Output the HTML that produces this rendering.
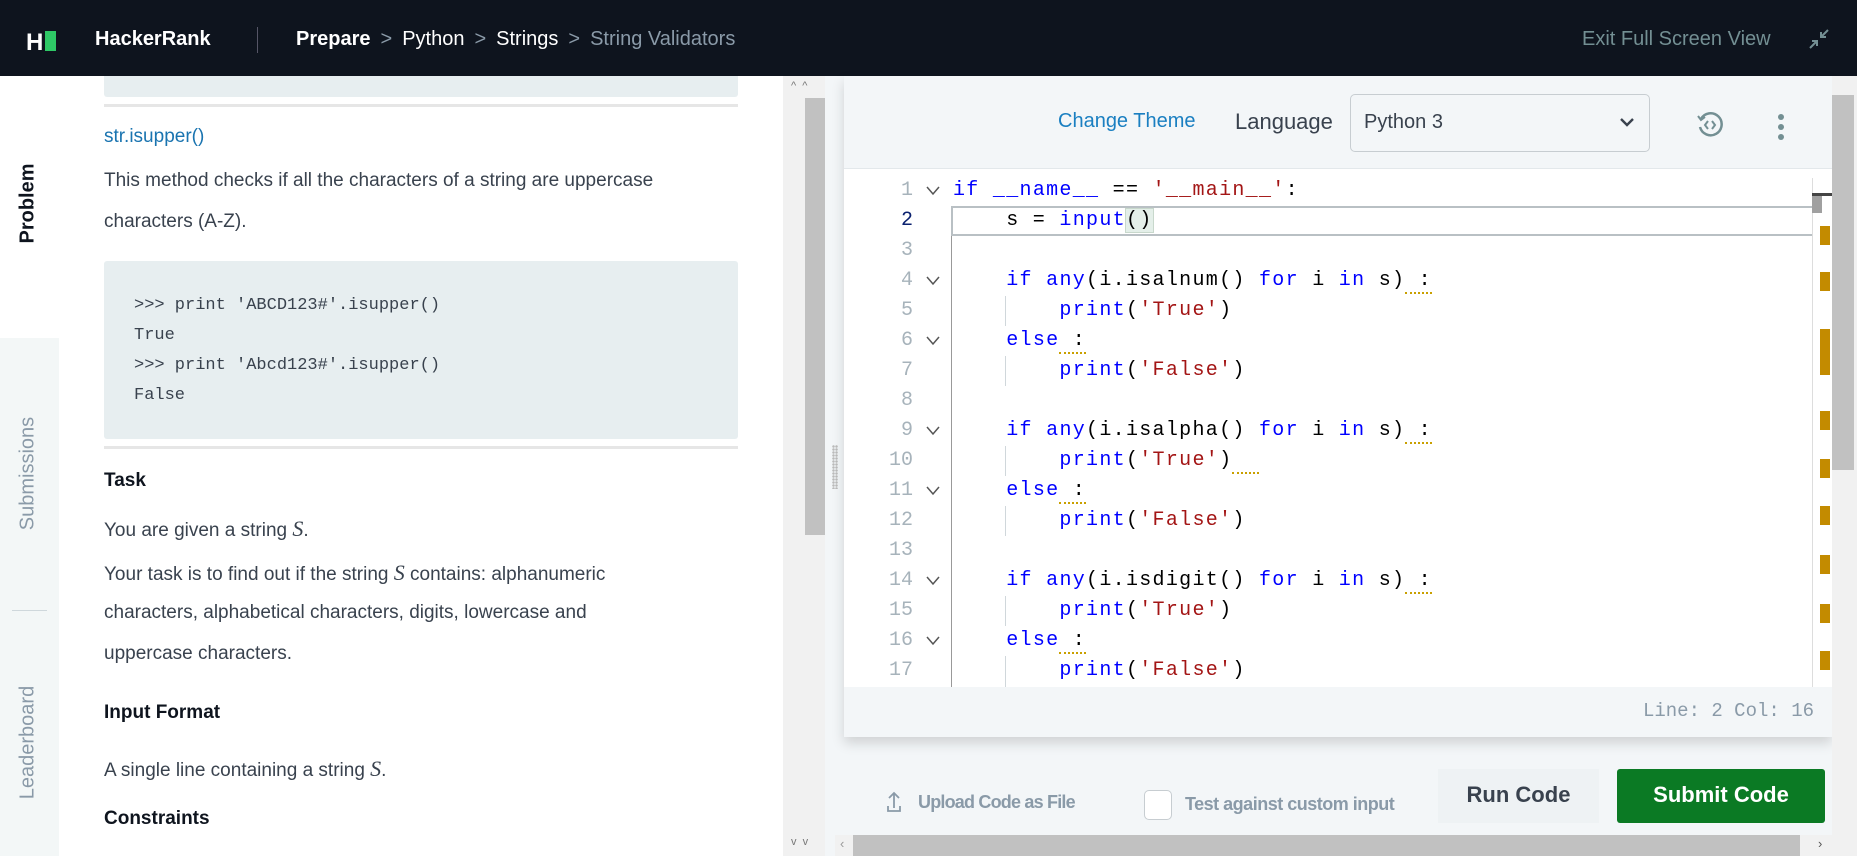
<!DOCTYPE html>
<html><head><meta charset="utf-8"><style>
*{margin:0;padding:0;box-sizing:border-box}
body{width:1857px;height:856px;overflow:hidden;background:#fff;font-family:"Liberation Sans",sans-serif;position:relative}
.a{position:absolute;white-space:nowrap}
.hdr{left:0;top:0;width:1857px;height:76px;background:#0e141e}
.sb{left:0;top:76px;width:59px;height:780px;background:#f3f7f7}
.rot{transform:rotate(-90deg);transform-origin:center;font-size:20px}
.p{color:#39424e;font-size:19px}
.mono{font-family:"Liberation Mono",monospace}
.code{font-family:"Liberation Mono",monospace;font-size:20px;letter-spacing:1.3px;line-height:30px;white-space:pre}
.ln{width:60px;text-align:right;color:#a7b3bb;font-family:"Liberation Mono",monospace;font-size:20px;left:853px}
.k{color:#0000ff}.s{color:#a31515}
.sq{border-bottom:2px dotted #c9a000}
.mk{left:1820px;width:10px;background:#c38b00}
.ig{width:1px;background:#d0d7db}
</style></head><body>
<div class="a hdr"></div>
<div class="a" style="left:26px;top:29px;color:#fff;font-weight:bold;font-size:24px">H</div>
<div class="a" style="left:45px;top:31px;width:11px;height:20px;background:#2ec866"></div>
<div class="a" style="left:95px;top:28px;color:#fff;font-weight:bold;font-size:20px">HackerRank</div>
<div class="a" style="left:257px;top:27px;width:1px;height:26px;background:#556"></div>
<div class="a" style="left:296px;top:28px;color:#fff;font-size:20px"><b>Prepare</b><span style="color:#8a9aa8;margin:0 10px">&gt;</span>Python<span style="color:#8a9aa8;margin:0 10px">&gt;</span>Strings<span style="color:#8a9aa8;margin:0 10px">&gt;</span><span style="color:#8a9aa8">String Validators</span></div>
<div class="a" style="left:1582px;top:28px;color:#738f93;font-size:20px">Exit Full Screen View</div>
<svg class="a" style="left:1808px;top:28px" width="22" height="22" viewBox="0 0 22 22" fill="none" stroke="#738f93" stroke-width="2"><path d="M20 2 L13 9 M13 4 V9 H18 M2 20 L9 13 M4 13 H9 V18"/></svg>

<div class="a sb"></div>
<div class="a" style="left:0;top:76px;width:59px;height:262px;background:#fff"></div>
<div class="a rot" style="left:-22px;top:192px;width:100px;text-align:center;font-weight:bold;color:#0e141e">Problem</div>
<div class="a rot" style="left:-42px;top:462px;width:140px;text-align:center;color:#8a9aa8">Submissions</div>
<div class="a" style="left:12px;top:610px;width:35px;height:1px;background:#cfd8dc"></div>
<div class="a rot" style="left:-42px;top:731px;width:140px;text-align:center;color:#8a9aa8">Leaderboard</div>

<div class="a" style="left:104px;top:76px;width:634px;height:21px;background:#e7eef0;border-radius:0 0 3px 3px"></div>
<div class="a" style="left:104px;top:104px;width:634px;height:3px;background:#e6e6e6"></div>
<div class="a" style="left:104px;top:126px;color:#1a74b0;font-size:19px">str.isupper()</div>
<div class="a p" style="left:104px;top:170px">This method checks if all the characters of a string are uppercase</div>
<div class="a p" style="left:104px;top:211px">characters (A-Z).</div>
<div class="a" style="left:104px;top:261px;width:634px;height:178px;background:#e7eef0;border-radius:3px"></div>
<div class="a mono" style="left:134px;top:291px;font-size:17px;line-height:30px;color:#39424e">&gt;&gt;&gt; print 'ABCD123#'.isupper()<br>True<br>&gt;&gt;&gt; print 'Abcd123#'.isupper()<br>False</div>
<div class="a" style="left:104px;top:446px;width:634px;height:3px;background:#e6e6e6"></div>
<div class="a" style="left:104px;top:470px;color:#0e141e;font-size:19px;font-weight:bold">Task</div>
<div class="a p" style="left:104px;top:516px">You are given a string <i style="font-family:'Liberation Serif',serif;font-size:22px">S</i>.</div>
<div class="a p" style="left:104px;top:560px">Your task is to find out if the string <i style="font-family:'Liberation Serif',serif;font-size:22px">S</i> contains: alphanumeric</div>
<div class="a p" style="left:104px;top:602px">characters, alphabetical characters, digits, lowercase and</div>
<div class="a p" style="left:104px;top:643px">uppercase characters.</div>
<div class="a" style="left:104px;top:702px;color:#0e141e;font-size:19px;font-weight:bold">Input Format</div>
<div class="a p" style="left:104px;top:756px">A single line containing a string <i style="font-family:'Liberation Serif',serif;font-size:22px">S</i>.</div>
<div class="a" style="left:104px;top:808px;color:#0e141e;font-size:19px;font-weight:bold">Constraints</div>

<div class="a" style="left:783px;top:76px;width:42px;height:780px;background:#f1f1f1"></div>
<div class="a" style="left:805px;top:98px;width:20px;height:437px;background:#c1c1c1"></div>
<div class="a" style="left:791px;top:80px;color:#777;font-size:11px">^ &nbsp;^</div>
<div class="a" style="left:791px;top:836px;color:#777;font-size:11px">v &nbsp;v</div>
<div class="a" style="left:825px;top:76px;width:1032px;height:780px;background:#f3f6f8"></div>
<div class="a" style="left:832px;top:445px;width:6px;height:44px;background:radial-gradient(#bbb 1px,transparent 1.5px) 0 0/3px 3px"></div>

<div class="a" style="left:844px;top:76px;width:988px;height:661px;background:#f3f6f8;box-shadow:0 6px 12px rgba(0,0,0,.15)"></div>
<div class="a" style="left:1058px;top:110px;color:#1a7fc1;font-size:20px">Change Theme</div>
<div class="a" style="left:1235px;top:109px;color:#39424e;font-size:22px">Language</div>
<div class="a" style="left:1350px;top:94px;width:300px;height:58px;border:1px solid #c7cdd1;border-radius:5px"></div>
<div class="a" style="left:1364px;top:111px;color:#39424e;font-size:20px">Python 3</div>
<svg class="a" style="left:1619px;top:116px" width="16" height="12"><path d="M2 3 L8 9 L14 3" stroke="#39424e" stroke-width="2.4" fill="none"/></svg>
<svg class="a" style="left:1695px;top:110px" width="30" height="30" viewBox="0 0 30 30" fill="none" stroke="#738f93" stroke-width="2.5"><path d="M6 9 A11 11 0 1 1 5 17"/><path d="M3 6 L6 10 L10 7" stroke-width="2"/><path d="M13 11 L10 15 L13 19 M17 11 L20 15 L17 19" stroke-width="2"/></svg>
<div class="a" style="left:1778px;top:114px;width:6px;height:6px;border-radius:3px;background:#738f93;box-shadow:0 10px 0 #738f93,0 20px 0 #738f93"></div>

<div class="a" style="left:844px;top:168px;width:988px;height:519px;background:#fff;border-top:1px solid #e3e8eb"></div>
<div class="a" style="left:1812px;top:178px;width:1px;height:509px;background:#ddd"></div>
<div class="a" style="left:1812px;top:193px;width:20px;height:3px;background:#444"></div>
<div class="a" style="left:1812px;top:196px;width:10px;height:17px;background:#a0a0a0"></div>
<div class="a mk" style="top:226px;height:19px"></div>
<div class="a mk" style="top:272px;height:19px"></div>
<div class="a mk" style="top:329px;height:46px"></div>
<div class="a mk" style="top:411px;height:19px"></div>
<div class="a mk" style="top:459px;height:19px"></div>
<div class="a mk" style="top:506px;height:19px"></div>
<div class="a mk" style="top:555px;height:19px"></div>
<div class="a mk" style="top:604px;height:19px"></div>
<div class="a mk" style="top:651px;height:19px"></div>

<div class="a" style="left:951px;top:206px;width:861px;height:30px;border:2px solid #b9c0c4;border-right:none"></div>
<div class="a" style="left:951px;top:236px;width:1px;height:451px;background:#999"></div>
<div class="a ig" style="left:1005px;top:296px;height:30px"></div>
<div class="a ig" style="left:1005px;top:356px;height:30px"></div>
<div class="a ig" style="left:1005px;top:446px;height:30px"></div>
<div class="a ig" style="left:1005px;top:506px;height:30px"></div>
<div class="a ig" style="left:1005px;top:596px;height:30px"></div>
<div class="a ig" style="left:1005px;top:656px;height:31px"></div>

<div class="a ln" style="top:176px;line-height:30px">1<br><span style="color:#0b216f">2</span><br>3<br>4<br>5<br>6<br>7<br>8<br>9<br>10<br>11<br>12<br>13<br>14<br>15<br>16<br>17</div>
<svg class="a" style="left:924px;top:176px" width="20" height="510" fill="none" stroke="#555" stroke-width="1.5">
<path d="M3 11 L9 18 L15 11"/><path d="M3 101 L9 108 L15 101"/><path d="M3 161 L9 168 L15 161"/><path d="M3 251 L9 258 L15 251"/><path d="M3 311 L9 318 L15 311"/><path d="M3 401 L9 408 L15 401"/><path d="M3 461 L9 468 L15 461"/></svg>
<div class="a code" style="left:953px;top:176px;color:#000"><span class="k">if</span> <span class="k">__name__</span> == <span class="s">'__main__'</span>:
    s = <span class="k">input</span><span style="background:#e4efe9;outline:1px solid #c8d8cc">()</span>
 
    <span class="k">if</span> <span class="k">any</span>(i.isalnum() <span class="k">for</span> i <span class="k">in</span> s)<span class="sq"> :</span>
        <span class="k">print</span>(<span class="s">'True'</span>)
    <span class="k">else</span><span class="sq"> :</span>
        <span class="k">print</span>(<span class="s">'False'</span>)
 
    <span class="k">if</span> <span class="k">any</span>(i.isalpha() <span class="k">for</span> i <span class="k">in</span> s)<span class="sq"> :</span>
        <span class="k">print</span>(<span class="s">'True'</span>)<span class="sq">  </span>
    <span class="k">else</span><span class="sq"> :</span>
        <span class="k">print</span>(<span class="s">'False'</span>)
 
    <span class="k">if</span> <span class="k">any</span>(i.isdigit() <span class="k">for</span> i <span class="k">in</span> s)<span class="sq"> :</span>
        <span class="k">print</span>(<span class="s">'True'</span>)
    <span class="k">else</span><span class="sq"> :</span>
        <span class="k">print</span>(<span class="s">'False'</span>)</div>
<div class="a mono" style="left:1618px;top:700px;width:196px;text-align:right;color:#8a9aa8;font-size:19px">Line: 2 Col: 16</div>

<div class="a" style="left:1832px;top:76px;width:25px;height:780px;background:#f1f1f1"></div>
<div class="a" style="left:1832px;top:95px;width:22px;height:375px;background:#c1c1c1"></div>

<svg class="a" style="left:886px;top:790px" width="16" height="24" fill="none" stroke="#8a9aa8" stroke-width="1.8"><path d="M8 18 V3 M3 8 L8 3 L13 8 M2 16 V21 H14 V16"/></svg>
<div class="a" style="left:918px;top:792px;color:#8a9aa8;font-size:18px;font-weight:bold;letter-spacing:-0.8px">Upload Code as File</div>
<div class="a" style="left:1144px;top:790px;width:28px;height:30px;border:1px solid #c7cdd1;border-radius:5px;background:#fff"></div>
<div class="a" style="left:1185px;top:794px;color:#8a9aa8;font-size:18px;font-weight:bold;letter-spacing:-0.5px">Test against custom input</div>
<div class="a" style="left:1438px;top:769px;width:161px;height:54px;background:#eef2f4"></div>
<div class="a" style="left:1438px;top:782px;width:161px;text-align:center;color:#39424e;font-size:22px;font-weight:bold">Run Code</div>
<div class="a" style="left:1617px;top:769px;width:208px;height:54px;background:#0b7a24;border-radius:3px"></div>
<div class="a" style="left:1617px;top:782px;width:208px;text-align:center;color:#fff;font-size:22px;font-weight:bold">Submit Code</div>

<div class="a" style="left:835px;top:835px;width:997px;height:21px;background:#f1f1f1"></div>
<div class="a" style="left:853px;top:835px;width:947px;height:21px;background:#c1c1c1"></div>
<div class="a" style="left:840px;top:836px;color:#999;font-size:13px">‹</div>
<div class="a" style="left:1818px;top:836px;color:#555;font-size:13px">›</div>
</body></html>
